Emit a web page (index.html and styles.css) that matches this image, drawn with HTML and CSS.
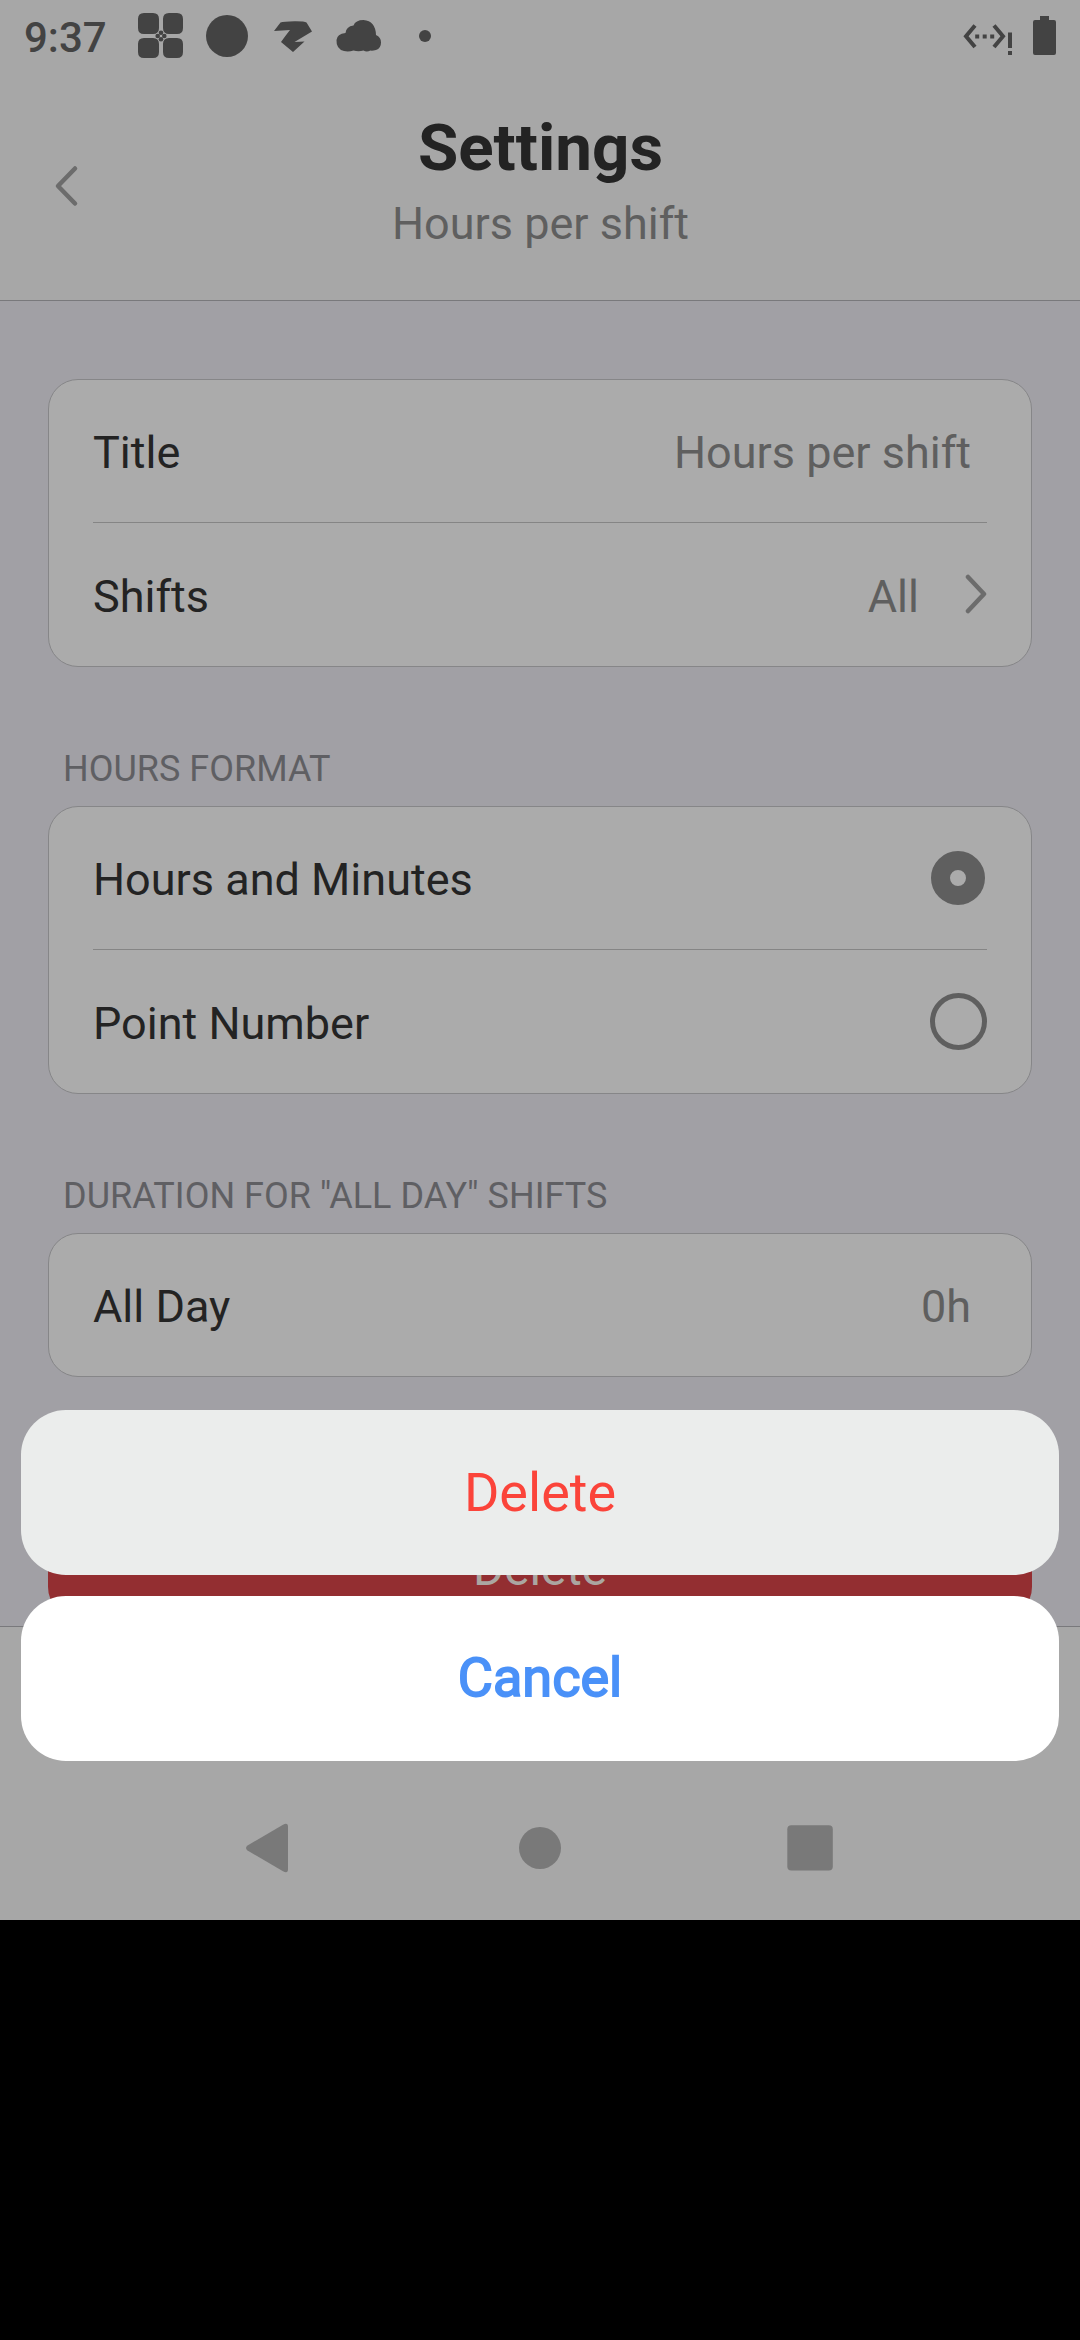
FILE: index.html
```html
<!DOCTYPE html>
<html lang="en">
<head>
<meta charset="utf-8">
<title>Settings</title>
<link rel="stylesheet" href="styles.css">
</head>
<body>
<div class="screen">
  <div class="status-bar">
    <span class="clock">9:37</span>
    <svg class="status-icons" width="310" height="72" viewBox="130 0 310 72" fill="#434343">
      <path d="M144 13h9q6 0 6 6v9q0 6-6 6h-9q-6 0-6-6v-9q0-6 6-6zM169 13h8q6 0 6 6v9q0 6-6 6h-8q-6 0-6-6v-9q0-6 6-6zM144 38h9q6 0 6 6v8q0 6-6 6h-9q-6 0-6-6v-8q0-6 6-6zM169 38h8q6 0 6 6v8q0 6-6 6h-8q-6 0-6-6v-8q0-6 6-6z"/>
      <path d="M161 29.500l7 6.500-7 6.500-7-6.500z" fill="#a7a7a7"/>
      <g><circle cx="161" cy="32.800" r="2.300"/><circle cx="164.300" cy="36" r="2.300"/><circle cx="161" cy="39.200" r="2.300"/><circle cx="157.700" cy="36" r="2.300"/></g>
      <circle cx="227" cy="36" r="21"/>
      <path d="M274 31l6.500-8.500q3-1 14-1.200 10-.1 12 1.200l5.500 9-17.500 10.500 10-.5-11.500 10.500-12-10q5-7 9-12z"/>
      <path d="M344 51q-8-2-7.500-11 .5-6 9-7 .5-6.500 8-7.500 2-5.500 10-5.500 12 1 12.500 15 5 2 5 7.500 0 6-5 7.500-4 1-5.500 .5-4 2-7 0-5 1.500-10 0-5 1.500-9.500 .500z"/>
      <circle cx="425" cy="36" r="6"/>
    </svg>
    <svg class="system-icons" width="100" height="72" viewBox="960 0 100 72" fill="#434343">
      <path d="M975 25.500L966 36.200l9 10.800M994 25.500l9 10.700-9 10.800" fill="none" stroke="#434343" stroke-width="4"/>
      <path d="M975.200 34.500h4v4h-4zM982.700 34.500h4v4h-4zM990.200 34.500h4v4h-4zM1008 32.500h4v15.500h-4zM1008 51h4v4h-4z"/>
      <path d="M1040 16h9v4h5q2 0 2 2v31q0 2-2 2h-19q-2 0-2-2v-31q0-2 2-2h5z"/>
    </svg>
  </div>
  <header class="header">
    <svg class="back" width="30" height="48" viewBox="0 0 30 48"><path d="M24 6.500L7 24 24 41.500"/></svg>
    <div class="heading">
      <h1>Settings</h1>
      <p>Hours per shift</p>
    </div>
  </header>
  <main class="content">
    <section class="card">
      <div class="row"><span>Title</span><span class="value inset">Hours per shift</span></div>
      <div class="row"><span>Shifts</span><span class="value">All<svg class="chevron" width="28" height="46" viewBox="0 0 28 46"><path d="M9 6l16 17L9 40"/></svg></span></div>
    </section>
    <h2>HOURS FORMAT</h2>
    <section class="card">
      <div class="row"><span>Hours and Minutes</span><i class="radio on"></i></div>
      <div class="row"><span>Point Number</span><i class="radio"></i></div>
    </section>
    <h2>DURATION FOR "ALL DAY" SHIFTS</h2>
    <section class="card">
      <div class="row"><span>All Day</span><span class="value inset">0h</span></div>
    </section>
    <button class="delete">Delete</button>
  </main>
  <nav class="navbar">
    <svg width="1080" height="100" viewBox="0 1800 1080 100" fill="#797979">
      <path d="M247.500 1845.500L283 1824.800Q288 1822 288 1827V1869Q288 1874 283 1871.200L247.500 1850.500Q244.500 1848 247.500 1845.500Z"/>
      <circle cx="540" cy="1848" r="21"/>
      <rect x="787.300" y="1825.300" width="45.500" height="45.200" rx="4"/>
    </svg>
  </nav>
  <div class="sheet">
    <button class="action destructive">Delete</button>
    <button class="action cancel">Cancel</button>
  </div>
</div>
</body>
</html>
```
FILE: styles.css
```css
* { box-sizing: border-box; }
html, body { margin: 0; background: #000; }
body { width: 1080px; height: 2340px; overflow: hidden; font-family: Roboto, sans-serif; }
h1, h2, p { margin: 0; font-weight: 400; }
button { border: 0; font-family: inherit; display: block; padding: 0; }
svg { display: block; flex: none; }

.screen {
  position: relative;
  width: 1080px;
  height: 1920px;
  display: flex;
  flex-direction: column;
  background: #a1a0a5;
}

.status-bar {
  height: 72px;
  padding-left: 24px;
  display: flex;
  background: #a7a7a7;
}
.clock { width: 106px; font-size: 42px; line-height: 75px; color: #434343; font-weight: 500; }
.system-icons { margin-left: auto; margin-right: 20px; }

.header {
  height: 229px;
  display: flex;
  background: #a7a7a7;
  border-bottom: 1px solid #79797c;
}
.back { margin: 90px 0 0 51px; }
.heading { flex: 1; margin-right: 80px; text-align: center; }
.heading h1 { margin-top: 38px; font-size: 65.5px; line-height: 76px; font-weight: 700; color: #232323; }
.heading p { margin-top: 11px; font-size: 45px; line-height: 54px; color: #5f5f5f; }
.back path, .chevron path { fill: none; stroke: #6c6c6c; stroke-width: 4.500; stroke-linecap: round; stroke-linejoin: round; }

.content { height: 1325px; padding: 78px 48px 0; overflow: hidden; }
.card {
  background: #ababab;
  border: 1px solid #868688;
  border-radius: 30px;
  padding: 0 44px;
}
.row {
  height: 142px;
  padding-top: 3px;
  display: flex;
  align-items: center;
  justify-content: space-between;
  font-size: 45px;
  color: #232323;
}
.row + .row { height: 144px; border-top: 1px solid #858585; }
.value { display: flex; align-items: center; color: #5f5f5f; }
.inset { margin-right: 16px; }
.chevron { margin: 0 0 4px 40px; }
h2 {
  height: 139px;
  padding: 81px 0 0 15px;
  font-size: 36px;
  line-height: 43px;
  color: #5f5f63;
}
.radio { width: 57px; height: 57px; margin-bottom: 4px; border: 5px solid #5f5f5f; border-radius: 50%; }
.radio.on { width: 54px; height: 54px; margin-right: 2px; border-width: 19px; }
.delete {
  width: 984px;
  height: 97px;
  margin-top: 143px;
  border-radius: 30px;
  background: #932e31;
  color: #aba6a1;
  font-size: 47.5px;
}

.navbar { flex: 1; border-top: 1px solid #79797c; background: #a7a7a7; padding-top: 173px; }

/* Action sheet above the dimmed page */
.sheet {
  position: absolute;
  top: 1410px;
  left: 21px;
  right: 21px;
  display: flex;
  flex-direction: column;
  gap: 21px;
}
.action { height: 165px; border-radius: 45px; font-size: 54px; }
.destructive { background: #ebedec; color: #fb443a; }
.cancel { padding-bottom: 2px; background: #fff; color: #4a91f8; -webkit-text-stroke: 1.800px #4a91f8; }
```
